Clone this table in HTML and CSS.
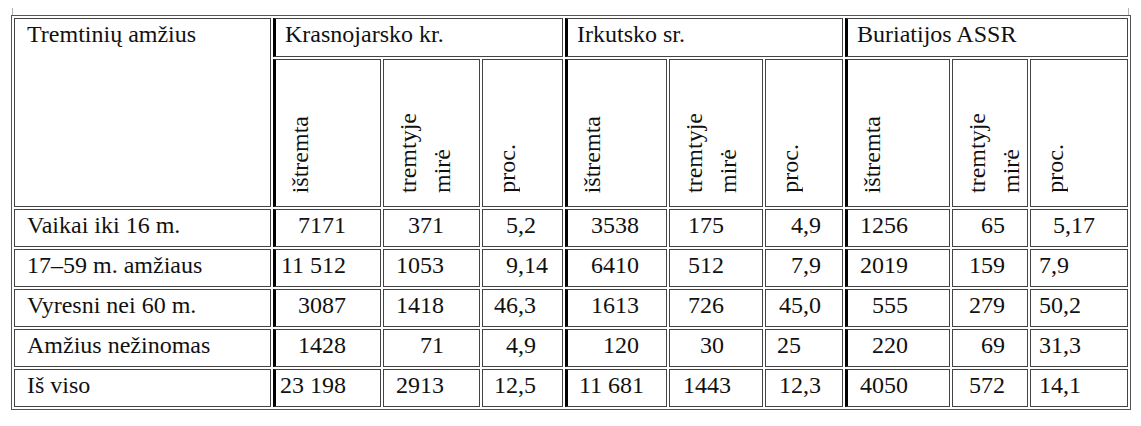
FILE: index.html
```html
<!DOCTYPE html>
<html lang="lt">
<head>
<meta charset="utf-8">
<title>Tremtinių amžius</title>
<link rel="stylesheet" href="styles.css">
</head>
<body>
<div class="page">
  <div class="ticks"></div>
  <table class="t">
    <colgroup>
      <col class="c0"><col class="c1"><col class="c2"><col class="c3"><col class="c4"><col class="c5"><col class="c6"><col class="c7"><col class="c8"><col class="c9">
    </colgroup>
    <tr class="r-h1">
      <th rowspan="2" class="age">Tremtinių amžius</th>
      <th colspan="3" class="grp g">Krasnojarsko kr.</th>
      <th colspan="3" class="grp g">Irkutsko sr.</th>
      <th colspan="3" class="grp g">Buriatijos ASSR</th>
    </tr>
    <tr class="r-h2">
      <th class="rot g"><span class="vt">ištremta</span></th>
      <th class="rot"><span class="vt">tremtyje<br>mirė</span></th>
      <th class="rot"><span class="vt">proc.</span></th>
      <th class="rot g"><span class="vt">ištremta</span></th>
      <th class="rot"><span class="vt">tremtyje<br>mirė</span></th>
      <th class="rot"><span class="vt">proc.</span></th>
      <th class="rot g"><span class="vt">ištremta</span></th>
      <th class="rot"><span class="vt">tremtyje<br>mirė</span></th>
      <th class="rot"><span class="vt">proc.</span></th>
    </tr>
    <tr class="r-d">
      <td class="lab">Vaikai iki 16 m.</td>
      <td class="g">7171</td><td>371</td><td>5,2</td>
      <td class="g">3538</td><td>175</td><td>4,9</td>
      <td class="g">1256</td><td>65</td><td class="in-22">5,17</td>
    </tr>
    <tr class="r-d">
      <td class="lab">17–59 m. amžiaus</td>
      <td class="g">11 512</td><td>1053</td><td class="out-14">9,14</td>
      <td class="g">6410</td><td>512</td><td>7,9</td>
      <td class="g">2019</td><td>159</td><td>7,9</td>
    </tr>
    <tr class="r-d">
      <td class="lab">Vyresni nei 60 m.</td>
      <td class="g">3087</td><td>1418</td><td>46,3</td>
      <td class="g">1613</td><td>726</td><td>45,0</td>
      <td class="g">555</td><td>279</td><td>50,2</td>
    </tr>
    <tr class="r-d">
      <td class="lab">Amžius nežinomas</td>
      <td class="g">1428</td><td>71</td><td>4,9</td>
      <td class="g">120</td><td>30</td><td class="in-11">25</td>
      <td class="g">220</td><td>69</td><td>31,3</td>
    </tr>
    <tr class="r-d">
      <td class="lab">Iš viso</td>
      <td class="g">23 198</td><td>2913</td><td>12,5</td>
      <td class="g out-22">11 681</td><td class="out-31">1443</td><td>12,3</td>
      <td class="g">4050</td><td>572</td><td>14,1</td>
    </tr>
  </table>
</div>
</body>
</html>
```

FILE: styles.css
```css
body {
  margin: 0;
  background: #fff;
  color: #111;
  font-family: "Liberation Serif", "Noto Serif", "Nimbus Roman", "Nimbus Roman No9 L", FreeSerif, "Noto Serif CJK SC", "Noto Serif CJK JP", "DejaVu Serif", Georgia, serif;
}

.page {
  padding-left: 11px;
  padding-top: 8px;
  width: 1120px;
}

.ticks {
  height: 7px;
  margin-left: 1px;
  margin-right: 2px;
  border-left: 1px solid #b4b4b4;
  border-right: 1px solid #b4b4b4;
}

.t {
  width: 1120px;
  box-sizing: border-box;
  table-layout: fixed;
  border-collapse: separate;
  border-spacing: 2px;
  border: 1px solid #555;
  font-family: inherit;
  font-size: 24px;
  line-height: 27px;
}

.c0 { width: 257px; }
.c1 { width: 108px; }
.c2 { width: 97px; }
.c3 { width: 81px; }
.c4 { width: 102px; }
.c5 { width: 94px; }
.c6 { width: 78px; }
.c7 { width: 105px; }
.c8 { width: 76px; }
.c9 { width: 98px; }

.t td,
.t th {
  box-sizing: border-box;
  border: 1px solid #444;
  padding: 2px 0 0 0;
  vertical-align: top;
  font-weight: normal;
  text-align: right;
  white-space: nowrap;
  overflow: hidden;
}

.t .g {
  border-left: 3px solid #000;
}

.r-h1 { height: 39px; }
.r-h2 { height: 148px; }
.r-d { height: 38px; }

.t .age,
.t .lab {
  text-align: left;
  padding-left: 12px;
}

.t .grp {
  text-align: left;
  padding-left: 9px;
}

.t .rot {
  vertical-align: bottom;
  text-align: left;
  padding: 0 0 13px 7px;
  font-size: 0;
  line-height: 0;
}

.vt {
  display: inline-block;
  vertical-align: bottom;
  writing-mode: vertical-rl;
  transform: rotate(180deg);
  font-size: 24px;
  line-height: 34px;
  white-space: nowrap;
}

.r-d td:nth-child(2) { padding-right: 34px; }
.r-d td:nth-child(3) { padding-right: 35px; }
.r-d td:nth-child(4) { padding-right: 26px; }
.r-d td:nth-child(5) { padding-right: 27px; }
.r-d td:nth-child(6) { padding-right: 38px; }
.r-d td:nth-child(7) { padding-right: 21px; }
.r-d td:nth-child(8) { padding-right: 41px; }
.r-d td:nth-child(9) { padding-right: 22px; }
.r-d td:nth-child(10) { text-align: left; padding-left: 8px; }

.r-d td.out-14 { padding-right: 14px; }
.r-d td.out-22 { padding-right: 22px; }
.r-d td.out-31 { padding-right: 31px; }
.r-d td.in-11 { text-align: left; padding-left: 11px; padding-right: 0; }
.r-d td.in-22 { text-align: left; padding-left: 22px; }
```
